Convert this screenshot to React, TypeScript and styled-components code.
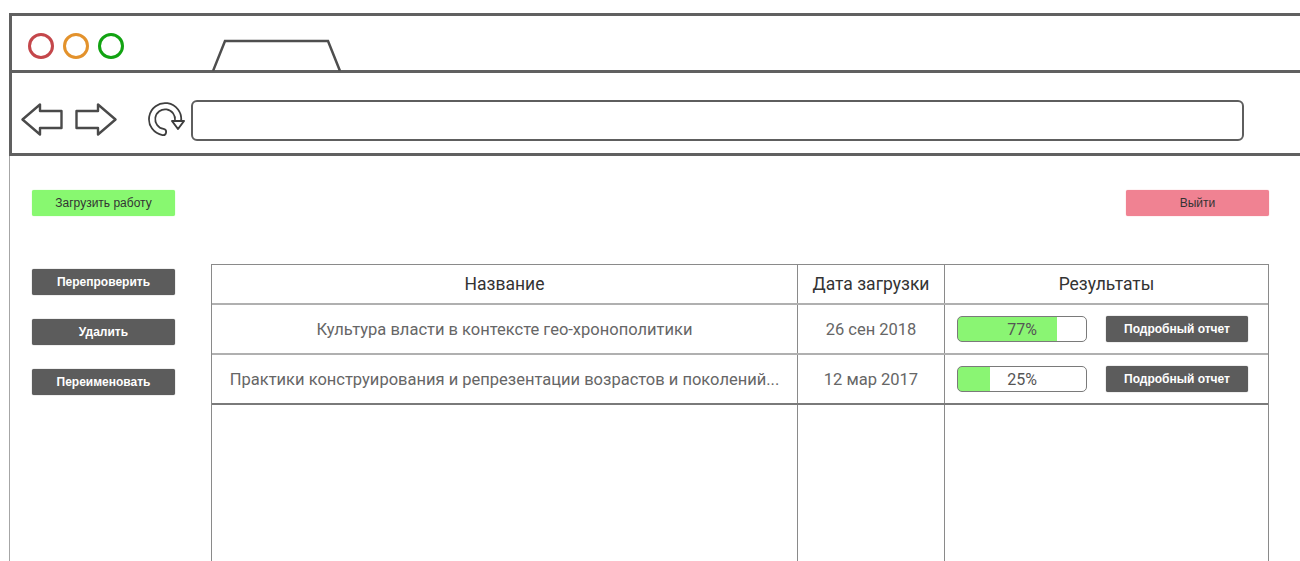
import React from 'react';
import styled, { createGlobalStyle } from 'styled-components';

interface Work {
  id: number;
  title: string;
  date: string;
  score: number;
}

const works: Work[] = [
  { id: 1, title: 'Культура власти в контексте гео-хронополитики', date: '26 сен 2018', score: 77 },
  {
    id: 2,
    title: 'Практики конструирования и репрезентации возрастов и поколений...',
    date: '12 мар 2017',
    score: 25,
  },
];

const GlobalStyle = createGlobalStyle`
  html, body {
    margin: 0;
    padding: 0;
    background: #fff;
    overflow: hidden;
  }
  body {
    font-family: Roboto, "Liberation Sans", sans-serif;
  }
`;

const Page = styled.div`
  padding: 13px 0 0 9px;
  width: 1291px;
  height: 548px;
  overflow: hidden;
`;

const Chrome = styled.div`
  width: 1320px;
  border-top: 3px solid #606060;
  border-left: 3px solid #606060;
`;

const TitleBar = styled.div`
  display: flex;
  height: 54px;
  padding-left: 16px;
  border-bottom: 3px solid #606060;
`;

const Lights = styled.div`
  display: flex;
  gap: 9px;
  margin-top: 17px;
`;

const Light = styled.span<{ $color: string }>`
  box-sizing: border-box;
  width: 26px;
  height: 26px;
  border-radius: 50%;
  border: 3px solid ${({ $color }) => $color};
`;

const Tab = styled.svg`
  align-self: flex-end;
  margin-left: 88px;
  margin-bottom: -1px;
`;

const NavBar = styled.div`
  display: flex;
  align-items: flex-start;
  height: 83px;
  padding: 27px 0 0 9px;
  box-sizing: border-box;
  border-bottom: 3px solid #606060;
`;

const NavIcon = styled.svg<{ $gap: number; $top?: number }>`
  margin-left: ${({ $gap }) => $gap}px;
  margin-top: ${({ $top = 3 }) => $top}px;
  flex-shrink: 0;
`;

const AddressBar = styled.div`
  width: 1053px;
  height: 41px;
  margin-left: 5px;
  box-sizing: border-box;
  border: 2px solid #5e5e5e;
  border-radius: 6px;
`;

const Content = styled.div`
  border-left: 1px solid #a6a6a6;
  padding: 34px 31px 0 22px;
  height: 400px;
`;

const TopRow = styled.div`
  display: flex;
  justify-content: space-between;
`;

const Button = styled.button<{ $bg: string; $fg: string; $bold?: boolean }>`
  width: 143px;
  height: 26px;
  padding: 0;
  border: none;
  border-radius: 2px;
  background: ${({ $bg }) => $bg};
  color: ${({ $fg }) => $fg};
  font-family: "Liberation Sans", Arial, sans-serif;
  font-size: ${({ $bold }) => ($bold ? 12 : 12)}px;
  font-weight: ${({ $bold }) => ($bold ? 700 : 400)};
  box-shadow: 0 0 1px ${({ $bg }) => $bg};
  cursor: pointer;
`;

const Main = styled.div`
  display: flex;
  gap: 36px;
  margin-top: 48px;
`;

const Sidebar = styled.div`
  display: flex;
  flex-direction: column;
  gap: 24px;
  padding-top: 5px;
  width: 143px;
  flex-shrink: 0;
`;

const Table = styled.div`
  flex: 1;
  border: 1px solid #8a8a8a;
  border-bottom: none;
`;

const Row = styled.div<{ $height: number; $strong?: boolean }>`
  display: grid;
  grid-template-columns: 585px 147px 1fr;
  height: ${({ $height }) => $height}px;
  border-bottom: ${({ $strong }) => ($strong ? '2px solid #7a7a7a' : '2px solid #b0b0b0')};
  &:last-child {
    border-bottom: none;
  }
`;

const Cell = styled.div<{ $head?: boolean }>`
  display: flex;
  align-items: center;
  justify-content: center;
  padding: 0 10px;
  min-width: 0;
  font-size: ${({ $head }) => ($head ? 17.5 : 16.5)}px;
  color: ${({ $head }) => ($head ? '#333' : '#666')};
  white-space: nowrap;
  overflow: hidden;
  & + & {
    border-left: 1px solid #8a8a8a;
  }
`;

const ResultCell = styled(Cell)`
  justify-content: flex-start;
  gap: 19px;
  padding: 0 0 0 12px;
`;

const Progress = styled.div`
  display: flex;
  align-items: center;
  justify-content: center;
  width: 130px;
  height: 26px;
  box-sizing: border-box;
  border: 1.5px solid #7a7a7a;
  border-radius: 5px;
  font-size: 16px;
  color: #555;
`;

const ReportButton = styled(Button)`
  width: 142px;
`;

const Arrow = ({ flip }: { flip?: boolean }) => (
  <g transform={flip ? 'translate(42 0) scale(-1 1)' : undefined}>
    <polygon
      points="1.5,16.5 19,1.5 19,8 40.5,8 40.5,25 19,25 19,31.5"
      fill="none"
      stroke="#4a4a4a"
      strokeWidth="2.4"
      strokeLinejoin="round"
    />
  </g>
);

const Refresh = () => (
  <>
    <path d="M15 32 A13 13 0 1 1 30 21" fill="none" stroke="#3e3e3e" strokeWidth="8" strokeLinecap="round" />
    <path d="M15 32 A13 13 0 1 1 30 21" fill="none" stroke="#fff" strokeWidth="4.5" strokeLinecap="round" />
    <polygon points="24,21 36,21 30,29" fill="#fff" stroke="#3e3e3e" strokeWidth="2" strokeLinejoin="round" />
  </>
);

export default function App() {
  return (
    <>
      <GlobalStyle />
      <Page>
        <Chrome>
          <TitleBar>
            <Lights>
              <Light $color="#c4474b" />
              <Light $color="#e3922c" />
              <Light $color="#12a312" />
            </Lights>
            <Tab width="130" height="32" viewBox="0 0 130 32">
              <path d="M1 32 L13 2 L116 2 L128 32" fill="none" stroke="#4e4e4e" strokeWidth="2.5" />
            </Tab>
          </TitleBar>
          <NavBar>
            <NavIcon $gap={0} width="42" height="34" viewBox="0 0 42 34">
              <Arrow />
            </NavIcon>
            <NavIcon $gap={12} width="42" height="34" viewBox="0 0 42 34">
              <Arrow flip />
            </NavIcon>
            <NavIcon $gap={31} $top={0} width="38" height="40" viewBox="0 0 38 40">
              <Refresh />
            </NavIcon>
            <AddressBar />
          </NavBar>
        </Chrome>

        <Content>
          <TopRow>
            <Button $bg="#88f870" $fg="#333">Загрузить работу</Button>
            <Button $bg="#f08292" $fg="#333">Выйти</Button>
          </TopRow>

          <Main>
            <Sidebar>
              <Button $bg="#5c5c5c" $fg="#fff" $bold>Перепроверить</Button>
              <Button $bg="#5c5c5c" $fg="#fff" $bold>Удалить</Button>
              <Button $bg="#5c5c5c" $fg="#fff" $bold>Переименовать</Button>
            </Sidebar>

            <Table>
              <Row $height={38}>
                <Cell $head>Название</Cell>
                <Cell $head>Дата загрузки</Cell>
                <Cell $head>Результаты</Cell>
              </Row>
              {works.map((w, i) => (
                <Row key={w.id} $height={48} $strong={i === works.length - 1}>
                  <Cell>{w.title}</Cell>
                  <Cell>{w.date}</Cell>
                  <ResultCell>
                    <Progress
                      style={{ background: `linear-gradient(to right, #8af573 ${w.score}%, #fff ${w.score}%)` }}
                    >
                      {w.score}%
                    </Progress>
                    <ReportButton $bg="#5c5c5c" $fg="#fff" $bold>Подробный отчет</ReportButton>
                  </ResultCell>
                </Row>
              ))}
              <Row $height={220}>
                <Cell />
                <Cell />
                <Cell />
              </Row>
            </Table>
          </Main>
        </Content>
      </Page>
    </>
  );
}
